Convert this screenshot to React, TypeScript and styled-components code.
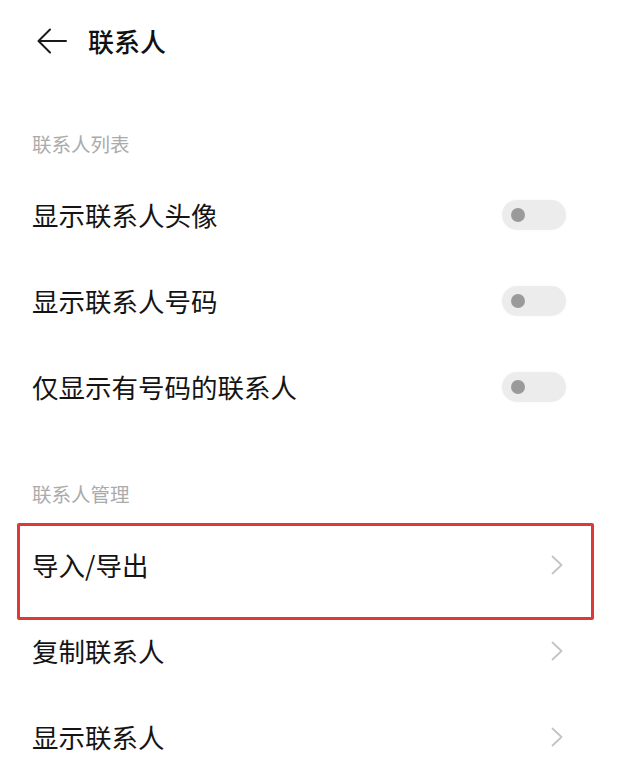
import React, { FC } from 'react'
import styled, { createGlobalStyle } from 'styled-components'

const GlobalStyle = createGlobalStyle`
  html, body {
    margin: 0;
    padding: 0;
    background: #ffffff;
  }
  body {
    font-family: "Noto Sans CJK SC", "Noto Sans", sans-serif;
    color: #151515;
  }
`

interface SettingItem {
  label: string
  kind: 'toggle' | 'link'
  highlighted?: boolean
}

const listSettings: SettingItem[] = [
  { label: '显示联系人头像', kind: 'toggle' },
  { label: '显示联系人号码', kind: 'toggle' },
  { label: '仅显示有号码的联系人', kind: 'toggle' },
]

const manageSettings: SettingItem[] = [
  { label: '导入/导出', kind: 'link', highlighted: true },
  { label: '复制联系人', kind: 'link' },
  { label: '显示联系人', kind: 'link' },
]

const BackArrow: FC = () => (
  <svg width="30" height="26" viewBox="0 0 30 26" fill="none">
    <path
      d="M29 13H2M13 1.5L1.5 13L13 24.5"
      stroke="#1a1a1a"
      strokeWidth="2"
      strokeLinecap="round"
      strokeLinejoin="round"
    />
  </svg>
)

const Chevron: FC = () => (
  <svg width="12" height="20" viewBox="0 0 12 20" fill="none">
    <path
      d="M1.5 1.5L10.5 10L1.5 18.5"
      stroke="#c4c4c4"
      strokeWidth="1.8"
      strokeLinecap="round"
      strokeLinejoin="round"
    />
  </svg>
)

const Row: FC<{ item: SettingItem }> = ({ item }) => (
  <RowWrap>
    <RowLabel>{item.label}</RowLabel>
    {item.kind === 'toggle' ? (
      <Toggle>
        <Knob />
      </Toggle>
    ) : (
      <ChevronBox>
        <Chevron />
      </ChevronBox>
    )}
    {item.highlighted && <Highlight />}
  </RowWrap>
)

const App: FC = () => (
  <>
    <GlobalStyle />
    <Page>
      <Header>
        <BackButton>
          <BackArrow />
        </BackButton>
        <Title>联系人</Title>
      </Header>

      <SectionTitle $top={48}>联系人列表</SectionTitle>
      <List>
        {listSettings.map((item) => (
          <Row key={item.label} item={item} />
        ))}
      </List>

      <SectionTitle $top={50}>联系人管理</SectionTitle>
      <List>
        {manageSettings.map((item) => (
          <Row key={item.label} item={item} />
        ))}
      </List>
    </Page>
  </>
)

const Page = styled.div`
  width: 626px;
  min-height: 784px;
  background: #ffffff;
`
const Header = styled.header`
  display: flex;
  align-items: center;
  height: 82px;
  padding-left: 37px;
  gap: 21px;
`
const BackButton = styled.div`
  display: flex;
  align-items: center;
  width: 30px;
  height: 26px;
`
const Title = styled.h1`
  margin: 0;
  font-size: 26px;
  font-weight: 500;
  line-height: 1;
  color: #111111;
`
const SectionTitle = styled.div<{ $top: number }>`
  padding: ${(p) => p.$top}px 32px 14px;
  font-size: 19.5px;
  line-height: 28px;
  color: #ababab;
`
const List = styled.div`
  display: flex;
  flex-direction: column;
`
const RowWrap = styled.div`
  position: relative;
  display: flex;
  align-items: center;
  justify-content: space-between;
  height: 86px;
  padding: 0 32px;
`
const RowLabel = styled.span`
  font-size: 26.5px;
  line-height: 1;
  color: #141414;
`
const Toggle = styled.div`
  display: flex;
  align-items: center;
  box-sizing: border-box;
  width: 64px;
  height: 30px;
  margin-right: 28px;
  padding-left: 9px;
  border-radius: 15px;
  background: #ececec;
  box-shadow: 0 0 3px rgba(0, 0, 0, 0.04);
`
const Knob = styled.div`
  width: 14px;
  height: 14px;
  border-radius: 50%;
  background: #9a9a9a;
`
const ChevronBox = styled.div`
  display: flex;
  align-items: center;
  margin-right: 31px;
`
const Highlight = styled.div`
  position: absolute;
  top: 1px;
  left: 17px;
  width: 577px;
  height: 97px;
  box-sizing: border-box;
  border: 3px solid #dc3a34;
  border-radius: 2px;
  pointer-events: none;
`

export default App
